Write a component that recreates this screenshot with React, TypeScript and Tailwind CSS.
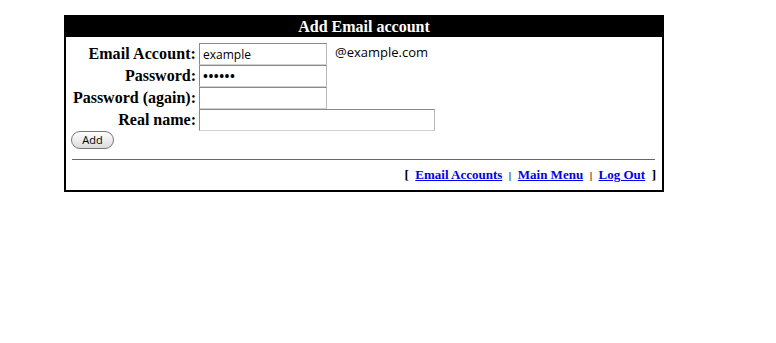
export default function App() {
  const label = 'text-right pr-[3px] font-bold text-[16px] leading-[22px] whitespace-nowrap'
  const input =
    'h-[22px] border border-t-[#8a8a8a] border-l-[#8a8a8a] border-r-[#b8b8b8] border-b-[#d0d0d0] bg-white px-[3px] text-[12px] font-["Open_Sans",sans-serif] outline-none'

  return (
    <div className="w-[776px] h-[343px] bg-white font-['Liberation_Serif',serif] text-black">
      <div className="ml-[64px] mt-[15px] w-[600px] h-[177px] border-2 border-black flex flex-col">
        <div className="h-[20px] bg-black text-white text-center font-bold text-[16px] leading-[20px]">
          Add Email account
        </div>
        <div className="pl-[5px] pr-[7px] pt-[6px]">
          <div className="grid grid-cols-[128px_auto] items-center">
            <div className={`${label} tracking-[0.1px]`}>Email Account:</div>
            <div className="flex items-start">
              <input className={`${input} w-[128px]`} defaultValue="example" readOnly />
              <span className="ml-[8px] text-[13px] leading-[18px] font-['Open_Sans',sans-serif]">@example.com</span>
            </div>
            <div className={label}>Password:</div>
            <input
              type="password"
              className={`${input} w-[128px] text-[13px] font-bold tracking-[0.5px]`}
              defaultValue="secret"
              readOnly
            />
            <div className={label}>Password (again):</div>
            <input type="password" className={`${input} w-[128px]`} readOnly />
            <div className={label}>Real name:</div>
            <input className={`${input} w-[236px]`} readOnly />
          </div>
          <button className="block mt-0 h-[18px] w-[43px] rounded-full border border-[#777] bg-gradient-to-b from-white to-[#dcdcdc] text-[11px] leading-[16px] font-['Open_Sans',sans-serif]">
            Add
          </button>
          <div className="mt-[10px] ml-[1px] h-px bg-[#666]" />
          <div className="mt-[7px] -mr-[1px] text-right text-[13px] font-bold leading-[16px]">
            [&nbsp;&nbsp;
            <a href="#" className="text-[#0000ee] underline">Email Accounts</a>
            &nbsp;&nbsp;<span className="text-[11px]">|</span>&nbsp;&nbsp;
            <a href="#" className="text-[#0000ee] underline">Main Menu</a>
            &nbsp;&nbsp;<span className="text-[11px]">|</span>&nbsp;&nbsp;
            <a href="#" className="text-[#0000ee] underline">Log Out</a>
            &nbsp;&nbsp;]
          </div>
        </div>
      </div>
    </div>
  )
}
